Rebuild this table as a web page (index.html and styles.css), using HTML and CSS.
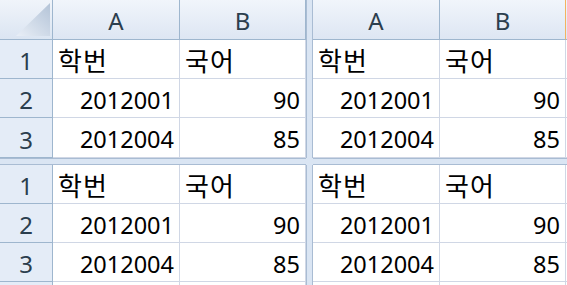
FILE: index.html
```html
<!DOCTYPE html>
<html lang="ko">
<head>
<meta charset="utf-8">
<title>Sheet</title>
<link rel="stylesheet" href="styles.css">
</head>
<body>
<div class="sheet">
  <div class="pane pane-tl">
    <div class="corner">
      <svg width="52" height="39" viewBox="0 0 52 39">
        <defs>
          <linearGradient id="tri" x1="0" y1="1" x2="1" y2="0">
            <stop offset="0" stop-color="#e9eff7"/>
            <stop offset="1" stop-color="#b3c3d7"/>
          </linearGradient>
        </defs>
        <polygon points="16,36 50,36 50,3" fill="url(#tri)"/>
      </svg>
    </div>
    <div class="colhead">A</div>
    <div class="colhead">B</div>
    <div class="rowhead">1</div><div class="cell ko">학번</div><div class="cell ko">국어</div>
    <div class="rowhead">2</div><div class="cell num">2012001</div><div class="cell num">90</div>
    <div class="rowhead">3</div><div class="cell num">2012004</div><div class="cell num">85</div>
  </div>
  <div class="vbar"></div>
  <div class="pane pane-tr">
    <div class="colhead">A</div>
    <div class="colhead last">B</div>
    <div class="colhead rest"></div>
    <div class="cell ko">학번</div><div class="cell ko">국어</div><div class="cell rest"></div>
    <div class="cell num">2012001</div><div class="cell num">90</div><div class="cell rest"></div>
    <div class="cell num">2012004</div><div class="cell num">85</div><div class="cell rest"></div>
  </div>
  <div class="hbar"></div>
  <div class="cross"></div>
  <div class="pane pane-bl">
    <div class="rowhead">1</div><div class="cell ko">학번</div><div class="cell ko">국어</div>
    <div class="rowhead">2</div><div class="cell num">2012001</div><div class="cell num">90</div>
    <div class="rowhead">3</div><div class="cell num">2012004</div><div class="cell num">85</div>
    <div class="rowhead"></div><div class="cell"></div><div class="cell"></div>
  </div>
  <div class="pane pane-br">
    <div class="cell ko">학번</div><div class="cell ko">국어</div><div class="cell rest"></div>
    <div class="cell num">2012001</div><div class="cell num">90</div><div class="cell rest"></div>
    <div class="cell num">2012004</div><div class="cell num">85</div><div class="cell rest"></div>
    <div class="cell"></div><div class="cell"></div><div class="cell rest"></div>
  </div>
</div>
</body>
</html>
```
FILE: styles.css
```css
* { box-sizing: border-box; }
html, body { margin: 0; padding: 0; background: #ffffff; }
.sheet {
  width: 567px;
  height: 285px;
  overflow: hidden;
  display: grid;
  grid-template-columns: 306px 7px 254px;
  grid-template-rows: 158px 7px 120px;
  font-family: "Noto Sans", "Noto Sans CJK KR", sans-serif;
  font-size: 23.5px;
  color: #000;
}
.pane { display: grid; overflow: hidden; background: #fff; }
.pane-tl { grid-column: 1; grid-row: 1; grid-template-columns: 53px 127px 126px; grid-template-rows: 40px 39px 39px 40px; }
.pane-tr { grid-column: 3; grid-row: 1; grid-template-columns: 127px 126px 1fr; grid-template-rows: 40px 39px 39px 40px; }
.pane-bl { grid-column: 1; grid-row: 3; grid-template-columns: 53px 127px 126px; grid-template-rows: 39px 39px 39px 39px; }
.pane-br { grid-column: 3; grid-row: 3; grid-template-columns: 127px 126px 1fr; grid-template-rows: 39px 39px 39px 39px; }

.vbar {
  grid-column: 2; grid-row: 1 / 4;
  background: #dae5f3;
  border-left: 1px solid #a9bcd3;
  border-right: 1px solid #a9bcd3;
}
.hbar {
  grid-column: 1 / 4; grid-row: 2;
  background: #dae5f3;
  border-top: 1px solid #a9bcd3;
  border-bottom: 1px solid #a9bcd3;
}
.cross { grid-column: 2; grid-row: 2; background: #dae5f3; }

.corner {
  background: linear-gradient(#f0f4fa, #dbe5f2);
  border-right: 1px solid #9eb6ce;
  border-bottom: 1px solid #9eb6ce;
  display: flex;
}
.corner svg { display: block; }
.colhead {
  background: linear-gradient(#f1f5fb, #dde6f3);
  border-right: 1px solid #9eb6ce;
  border-bottom: 1px solid #9eb6ce;
  color: #2b3e4e;
  font-size: 24px;
  display: flex;
  align-items: center;
  justify-content: center;
  padding-top: 1px;
}
.colhead.last { border-right: 1px solid #f4b25f; }
.colhead.rest { border-right: none; }
.rowhead {
  background: #e4ecf7;
  border-right: 1px solid #9eb6ce;
  border-bottom: 1px solid #9eb6ce;
  color: #2b3e4e;
  font-size: 24px;
  display: flex;
  align-items: center;
  justify-content: center;
  padding-top: 3px;
}
.cell {
  border-right: 1px solid #d0d7e5;
  border-bottom: 1px solid #d0d7e5;
  display: flex;
  align-items: center;
  padding: 3px 5px 0 6px;
  white-space: nowrap;
}
.cell.ko { font-size: 26px; padding-left: 5px; padding-top: 1px; letter-spacing: 1px; }
.cell.num { justify-content: flex-end; }
.cell.rest { border-right: none; }
```
